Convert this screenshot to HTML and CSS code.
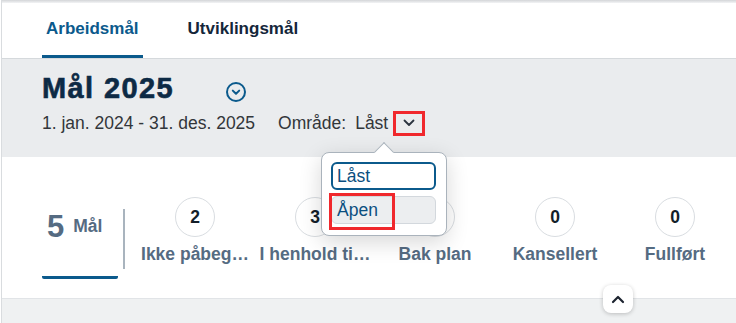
FILE: index.html
```html
<!DOCTYPE html>
<html>
<head>
<meta charset="utf-8">
<link rel="stylesheet" href="styles.css">
</head>
<body>
    <div class="page">
        <div class="shell-shadow"></div>
        <nav class="tabs">
            <div class="tab tab-active">Arbeidsmål</div>
            <div class="tab">Utviklingsmål</div>
        </nav>
        <header class="head">
            <div class="title-row">
                <h1 class="title">Mål 2025</h1>
                <span class="title-toggle">
                    <svg width="20" height="20" viewBox="0 0 20 20">
                        <circle cx="10" cy="10" r="9" fill="none" stroke="#0b5a8c" stroke-width="2" />
                        <path d="M6.8 8.6 L10 11.8 L13.2 8.6" fill="none" stroke="#0b5a8c" stroke-width="2" stroke-linecap="round" stroke-linejoin="round" />
                    </svg>
                </span>
            </div>
            <div class="meta">
                <span class="period">1. jan. 2024 - 31. des. 2025</span>
                <span class="area-label">Område:</span>
                <span class="area-value">Låst</span>
                <span class="area-btn">
                    <svg width="12" height="8" viewBox="0 0 12 8">
                        <path d="M1.5 1.5 L6 6 L10.5 1.5" fill="none" stroke="#2b3440" stroke-width="1.8" stroke-linecap="round" stroke-linejoin="round" />
                    </svg>
                </span>
                <!-- valgliste for område -->
                <div class="popover">
                    <div class="popover-arrow"></div>
                    <div class="option option-selected">Låst</div>
                    <div class="option option-hover">Åpen<span class="mark"></span></div>
                </div>
            </div>
        </header>
        <section class="kpis">
            <div class="kpi-total">
                <span class="kpi-total-num">5</span><span class="kpi-total-label">Mål</span>
            </div>
            <div class="kpi-sep"></div>
            <div class="kpi">
                <div class="kpi-count">2</div>
                <div class="kpi-label">Ikke påbeg…</div>
            </div>
            <div class="kpi">
                <div class="kpi-count">3</div>
                <div class="kpi-label">I henhold ti…</div>
            </div>
            <div class="kpi">
                <div class="kpi-count">0</div>
                <div class="kpi-label">Bak plan</div>
            </div>
            <div class="kpi">
                <div class="kpi-count">0</div>
                <div class="kpi-label">Kansellert</div>
            </div>
            <div class="kpi">
                <div class="kpi-count">0</div>
                <div class="kpi-label">Fullført</div>
            </div>
            <button class="collapse">
                <svg width="14" height="9" viewBox="0 0 14 9">
                    <path d="M2 7 L7 2 L12 7" fill="none" stroke="#1d2430" stroke-width="2.2" stroke-linecap="round" stroke-linejoin="round" />
                </svg>
            </button>
        </section>
        <div class="foot"></div>
    </div>
</body>
</html>
```

FILE: styles.css
```css
html, body {
    margin: 0;
    height: 100%;
}
body {
    font-family: "Liberation Sans", Arial, sans-serif;
    font-size: 17.5px;
    color: #32363a;
    background: #ffffff;
}
.page {
    margin-left: 1px;
    border-left: 1px solid #d9dcdf;
    min-height: 100%;
    display: flex;
    flex-direction: column;
}
.shell-shadow {
    height: 3px;
    background: linear-gradient(#d3d5d8, #f3f4f5);
}
.tabs {
    display: flex;
    height: 55px;
    padding-left: 40px;
    gap: 41px;
    border-bottom: 1px solid #d5d9dc;
    background: #ffffff;
}
.tab {
    box-sizing: border-box;
    height: 55px;
    padding: 0 4px;
    display: flex;
    align-items: center;
    font-size: 17px;
    font-weight: bold;
    color: #14263a;
    border-bottom: 3px solid transparent;
}
.tab-active {
    color: #0b5a8c;
    border-bottom-color: #0b5a8c;
}
.head {
    box-sizing: border-box;
    height: 98px;
    padding: 12px 0 0 40px;
    background: #eaecee;
    position: relative;
    z-index: 2;
}
.title-row {
    display: flex;
    align-items: center;
}
.title {
    margin: 0;
    font-size: 29px;
    line-height: 34px;
    font-weight: bold;
    letter-spacing: 1.4px;
    color: #0d2a45;
    -webkit-text-stroke: 0.6px #0d2a45;
}
.title-toggle {
    display: flex;
    margin-left: 52px;
    margin-top: 8px;
}
.meta {
    position: relative;
    display: flex;
    align-items: center;
    height: 26px;
    margin-top: 5px;
    line-height: 22px;
}
.area-label {
    margin-left: 23px;
}
.area-value {
    margin-left: 9px;
}
.area-btn {
    box-sizing: border-box;
    width: 32px;
    height: 25px;
    margin-left: 5px;
    border: 3px solid #f0282d;
    display: flex;
    align-items: center;
    justify-content: center;
}
.popover {
    position: absolute;
    left: 279px;
    top: 42px;
    box-sizing: border-box;
    width: 126px;
    height: 84px;
    padding: 9px 10px 0 9px;
    background: #ffffff;
    border: 1px solid #aab3bc;
    border-radius: 8px;
    box-shadow: 0 6px 22px rgba(0, 0, 0, 0.16);
}
.popover-arrow {
    position: absolute;
    left: 55px;
    top: -8px;
    width: 13px;
    height: 13px;
    background: #ffffff;
    border-left: 1px solid #aab3bc;
    border-top: 1px solid #aab3bc;
    transform: rotate(45deg);
}
.option {
    position: relative;
    box-sizing: border-box;
    height: 28px;
    padding-left: 4px;
    display: flex;
    align-items: center;
    border-radius: 6px;
    color: #0b4f80;
}
.option-selected {
    border: 2px solid #0b5a8c;
    background: #ffffff;
}
.option-hover {
    margin-top: 6px;
    padding-left: 5px;
    border: 1px solid #d3d8dd;
    background: #eceef0;
}
.mark {
    position: absolute;
    left: -3px;
    top: -4px;
    box-sizing: border-box;
    width: 66px;
    height: 37px;
    border: 3px solid #f0282d;
}
.kpis {
    position: relative;
    box-sizing: border-box;
    height: 142px;
    padding: 40px 0 0 40px;
    display: flex;
    align-items: flex-start;
    border-bottom: 1px solid #e1e4e7;
    background: #ffffff;
}
.kpi-total {
    box-sizing: border-box;
    width: 76px;
    height: 82px;
    padding: 12px 0 0 5px;
    border-bottom: 3px solid #0b5a8c;
    border-radius: 0 0 2px 2px;
    color: #556b82;
    font-weight: bold;
}
.kpi-total-num {
    font-size: 31px;
    line-height: 36px;
}
.kpi-total-label {
    margin-left: 9px;
    vertical-align: 5px;
}
.kpi-sep {
    width: 2px;
    height: 60px;
    margin: 12px 10px 0 5px;
    background: #a9b4be;
}
.kpi {
    width: 120px;
    display: flex;
    flex-direction: column;
    align-items: center;
}
.kpi-count {
    box-sizing: border-box;
    width: 40px;
    height: 40px;
    border: 1px solid #d9dde1;
    border-radius: 50%;
    display: flex;
    align-items: center;
    justify-content: center;
    font-weight: bold;
    color: #131e29;
}
.kpi-label {
    margin-top: 6px;
    line-height: 22px;
    font-weight: bold;
    color: #556b82;
    white-space: nowrap;
}
.collapse {
    position: absolute;
    left: 601px;
    top: 128px;
    width: 30px;
    height: 28px;
    padding: 0;
    border: none;
    border-radius: 8px;
    background: #ffffff;
    box-shadow: 0 1px 4px rgba(0, 0, 0, 0.22);
    display: flex;
    align-items: center;
    justify-content: center;
    z-index: 1;
}
.foot {
    flex: 1;
    background: #eff1f2;
}
```
